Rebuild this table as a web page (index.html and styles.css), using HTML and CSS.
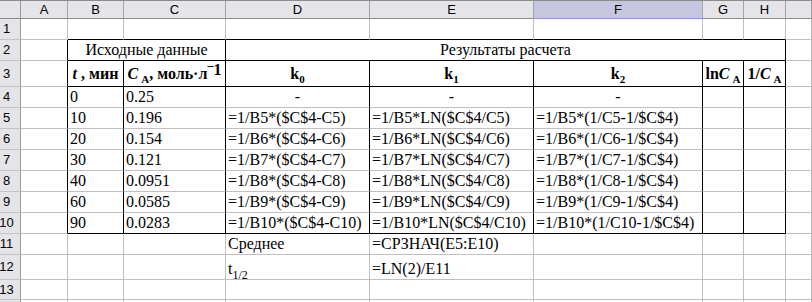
FILE: index.html
```html
<!DOCTYPE html>
<html lang="ru">
<head>
<meta charset="utf-8">
<title>Расчет</title>
<link rel="stylesheet" href="styles.css">
</head>
<body>
<div class="sheet">
  <div class="row hdr">
    <div class="c corner"></div>
    <div class="c ch"><span>A</span></div>
    <div class="c ch"><span>B</span></div>
    <div class="c ch"><span>C</span></div>
    <div class="c ch"><span>D</span></div>
    <div class="c ch"><span>E</span></div>
    <div class="c ch sel"><span>F</span></div>
    <div class="c ch"><span>G</span></div>
    <div class="c ch"><span>H</span></div>
    <div class="c ch last"></div>
  </div>

  <div class="row">
    <div class="c rh"><span>1</span></div>
    <div class="c"></div>
    <div class="c bB"></div><div class="c bB"></div>
    <div class="c bB"></div><div class="c bB"></div><div class="c bB"></div><div class="c bB"></div><div class="c bB"></div>
    <div class="c"></div>
  </div>

  <div class="row">
    <div class="c rh"><span>2</span></div>
    <div class="c bR"></div>
    <div class="c bR bB span2 center"><span>Исходные данные</span></div>
    <div class="c bR bB span5 center"><span>Результаты расчета</span></div>
    <div class="c"></div>
  </div>

  <div class="row r3">
    <div class="c rh"><span>3</span></div>
    <div class="c bR"></div>
    <div class="c bR bB center th"><span><i>t</i> , мин</span></div>
    <div class="c bR bB center th"><span><i>C</i><span class="sub subA">A</span>, моль·л<span class="sup"><span class="supm">–</span>1</span></span></div>
    <div class="c bR bB center th"><span>k<span class="sub">0</span></span></div>
    <div class="c bR bB center th"><span>k<span class="sub">1</span></span></div>
    <div class="c bR bB center th"><span>k<span class="sub">2</span></span></div>
    <div class="c bR bB center th"><span>ln<i>C</i><span class="sub subA">A</span></span></div>
    <div class="c bR bB center th"><span>1/<i>C</i><span class="sub subA">A</span></span></div>
    <div class="c"></div>
  </div>

  <div class="row">
    <div class="c rh"><span>4</span></div>
    <div class="c bR"></div>
    <div class="c bR"><span>0</span></div>
    <div class="c bR"><span>0.25</span></div>
    <div class="c bR center"><span>-</span></div>
    <div class="c bR center"><span>-</span></div>
    <div class="c bR center"><span>-</span></div>
    <div class="c bR"></div>
    <div class="c bR"></div>
    <div class="c"></div>
  </div>

  <div class="row">
    <div class="c rh"><span>5</span></div>
    <div class="c bR"></div>
    <div class="c bR"><span>10</span></div>
    <div class="c bR"><span>0.196</span></div>
    <div class="c bR"><span>=1/B5*($C$4-C5)</span></div>
    <div class="c bR"><span>=1/B5*LN($C$4/C5)</span></div>
    <div class="c bR"><span>=1/B5*(1/C5-1/$C$4)</span></div>
    <div class="c bR"></div>
    <div class="c bR"></div>
    <div class="c"></div>
  </div>

  <div class="row">
    <div class="c rh"><span>6</span></div>
    <div class="c bR"></div>
    <div class="c bR"><span>20</span></div>
    <div class="c bR"><span>0.154</span></div>
    <div class="c bR"><span>=1/B6*($C$4-C6)</span></div>
    <div class="c bR"><span>=1/B6*LN($C$4/C6)</span></div>
    <div class="c bR"><span>=1/B6*(1/C6-1/$C$4)</span></div>
    <div class="c bR"></div>
    <div class="c bR"></div>
    <div class="c"></div>
  </div>

  <div class="row">
    <div class="c rh"><span>7</span></div>
    <div class="c bR"></div>
    <div class="c bR"><span>30</span></div>
    <div class="c bR"><span>0.121</span></div>
    <div class="c bR"><span>=1/B7*($C$4-C7)</span></div>
    <div class="c bR"><span>=1/B7*LN($C$4/C7)</span></div>
    <div class="c bR"><span>=1/B7*(1/C7-1/$C$4)</span></div>
    <div class="c bR"></div>
    <div class="c bR"></div>
    <div class="c"></div>
  </div>

  <div class="row">
    <div class="c rh"><span>8</span></div>
    <div class="c bR"></div>
    <div class="c bR"><span>40</span></div>
    <div class="c bR"><span>0.0951</span></div>
    <div class="c bR"><span>=1/B8*($C$4-C8)</span></div>
    <div class="c bR"><span>=1/B8*LN($C$4/C8)</span></div>
    <div class="c bR"><span>=1/B8*(1/C8-1/$C$4)</span></div>
    <div class="c bR"></div>
    <div class="c bR"></div>
    <div class="c"></div>
  </div>

  <div class="row">
    <div class="c rh"><span>9</span></div>
    <div class="c bR"></div>
    <div class="c bR"><span>60</span></div>
    <div class="c bR"><span>0.0585</span></div>
    <div class="c bR"><span>=1/B9*($C$4-C9)</span></div>
    <div class="c bR"><span>=1/B9*LN($C$4/C9)</span></div>
    <div class="c bR"><span>=1/B9*(1/C9-1/$C$4)</span></div>
    <div class="c bR"></div>
    <div class="c bR"></div>
    <div class="c"></div>
  </div>

  <div class="row">
    <div class="c rh"><span>10</span></div>
    <div class="c bR"></div>
    <div class="c bR bB"><span>90</span></div>
    <div class="c bR bB"><span>0.0283</span></div>
    <div class="c bR bB"><span>=1/B10*($C$4-C10)</span></div>
    <div class="c bR bB"><span>=1/B10*LN($C$4/C10)</span></div>
    <div class="c bR bB"><span>=1/B10*(1/C10-1/$C$4)</span></div>
    <div class="c bR bB"></div>
    <div class="c bR bB"></div>
    <div class="c"></div>
  </div>

  <div class="row">
    <div class="c rh"><span>11</span></div>
    <div class="c"></div>
    <div class="c"></div>
    <div class="c"></div>
    <div class="c"><span>Среднее</span></div>
    <div class="c"><span>=СРЗНАЧ(E5:E10)</span></div>
    <div class="c"></div>
    <div class="c"></div>
    <div class="c"></div>
    <div class="c"></div>
  </div>

  <div class="row r12">
    <div class="c rh"><span>12</span></div>
    <div class="c"></div>
    <div class="c"></div>
    <div class="c"></div>
    <div class="c"><span>t<span class="sub half">1/2</span></span></div>
    <div class="c"><span>=LN(2)/E11</span></div>
    <div class="c"></div>
    <div class="c"></div>
    <div class="c"></div>
    <div class="c"></div>
  </div>

  <div class="row r13">
    <div class="c rh"><span>13</span></div>
    <div class="c"></div><div class="c"></div><div class="c"></div><div class="c"></div>
    <div class="c"></div><div class="c"></div><div class="c"></div><div class="c"></div><div class="c"></div>
  </div>

  <div class="row r14">
    <div class="c rh"></div>
    <div class="c"></div><div class="c"></div><div class="c"></div><div class="c"></div>
    <div class="c"></div><div class="c"></div><div class="c"></div><div class="c"></div><div class="c"></div>
  </div>
</div>
</body>
</html>
```

FILE: styles.css
```css
* {
  box-sizing: border-box;
}

html, body {
  margin: 0;
  padding: 0;
  background: #ffffff;
}

body {
  width: 812px;
  height: 302px;
  overflow: hidden;
}

.sheet {
  display: flex;
  flex-direction: column;
  height: 302px;
  overflow: hidden;
  font-family: "Times New Roman", serif;
  font-size: 16px;
  color: #000;
}

.row {
  display: grid;
  grid-template-columns: 21px 47px 56px 102px 144px 164px 169px 41px 42px 1fr;
  height: 21px;
  flex: none;
}

.r3 { height: 26px; }
.r12 { height: 25px; }
.r13 { height: 20px; }
.r14 { height: 2px; }

.c {
  display: flex;
  align-items: flex-end;
  padding: 0 0 1px 2px;
  line-height: 18px;
  white-space: nowrap;
  border-right: 1px solid #c0c0c0;
  border-bottom: 1px solid #c0c0c0;
  min-width: 0;
}

.r14 .c {
  border-bottom: 0;
}

.center {
  justify-content: center;
  padding-left: 0;
}

.span2 { grid-column: span 2; }
.span5 { grid-column: span 5; }

.bR { border-right-color: #000; }
.bB { border-bottom-color: #000; }

/* header row */
.hdr {
  height: 19px;
  border-top: 1px solid #8c8c8c;
}

.ch, .corner {
  background: #e4e4e9;
  font-family: "Liberation Sans", Arial, sans-serif;
  font-size: 13px;
  line-height: 17px;
  align-items: center;
  justify-content: center;
  padding: 0;
  border-right-color: #a4a4a8;
  border-bottom-color: #8c8c8c;
}

.ch.sel {
  background: #c6c7df;
  border-bottom-color: #8f8fff;
}

.corner {
  border-right-color: #9a9a9a;
}

/* row headers */
.rh {
  background: #e4e4e9;
  font-family: "Liberation Sans", Arial, sans-serif;
  font-size: 13px;
  line-height: 16px;
  align-items: center;
  justify-content: center;
  padding: 0 7px 0 0;
  border-right-color: #9a9a9a;
  border-bottom-color: #c4c4c8;
}

/* table heading cells */
.th {
  font-weight: bold;
  padding-bottom: 3px;
}

.sub {
  font-size: 11px;
  line-height: 0;
  vertical-align: -4px;
}

.subA {
  margin-left: 3px;
}

.half {
  font-size: 12px;
  vertical-align: -5px;
}

.sup {
  line-height: 0;
  vertical-align: 4px;
}

.supm {
  font-size: 12px;
  vertical-align: 6px;
  line-height: 0;
}
```
